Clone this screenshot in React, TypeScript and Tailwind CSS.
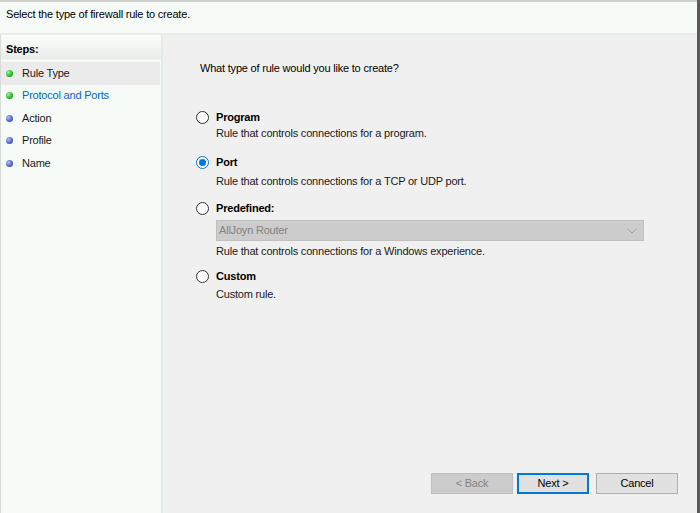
const steps = [
  { label: "Rule Type", done: true, current: false, selected: true },
  { label: "Protocol and Ports", done: true, current: true, selected: false },
  { label: "Action", done: false, current: false, selected: false },
  { label: "Profile", done: false, current: false, selected: false },
  { label: "Name", done: false, current: false, selected: false },
];

const Bullet = ({ done }: { done: boolean }) => (
  <span
    className={
      done
        ? "w-[7px] h-[7px] rounded-full bg-[radial-gradient(circle_at_35%_35%,#9ef59e,#1fb51f_60%,#0c7a0c)]"
        : "w-[7px] h-[7px] rounded-full bg-[radial-gradient(circle_at_35%_35%,#b8c0f5,#4f5fc8_60%,#2c3590)]"
    }
  />
);

const Radio = ({ checked }: { checked: boolean }) =>
  checked ? (
    <span className="w-[13px] h-[13px] rounded-full border border-[#0078d7] bg-white flex items-center justify-center">
      <span className="w-[7px] h-[7px] rounded-full bg-[#0078d7]" />
    </span>
  ) : (
    <span className="w-[13px] h-[13px] rounded-full border border-[#333333] bg-white" />
  );

const Label = ({ text, checked, className }: { text: string; checked?: boolean; className: string }) => (
  <div className={"flex items-center h-[15px] " + className}>
    <div className="w-[20px] flex">
      <Radio checked={!!checked} />
    </div>
    <span className="font-bold text-black">{text}</span>
  </div>
);

const Desc = ({ text, className }: { text: string; className: string }) => (
  <div className={"h-[15px] pl-[20px] text-[#1a1a1a] " + className}>{text}</div>
);

export default function App() {
  return (
    <div
      className="w-[700px] h-[513px] flex overflow-hidden bg-[#f0f0f0] text-[11px] leading-[15px] tracking-[-0.2px] text-black"
      style={{ fontFamily: '"Liberation Sans", Arial, sans-serif' }}
    >
      <div className="flex-1 flex flex-col border-t-2 border-[#cfcfcf]">
        <div className="h-[33px] bg-[#f7fbf7] pt-[5px] pl-[6px] border-b-2 border-[#e8ece8]">
          Select the type of firewall rule to create.
        </div>
        <div className="flex-1 flex">
          <div className="w-[163px] bg-[#f7fbf7] border-l border-[#d8dcd8] border-r-2 border-r-[#e6eae6] flex flex-col">
            <div className="h-[25px] flex items-center pl-[5px] pt-[4px] font-bold bg-[linear-gradient(#fbfdfb,#e9ede9)] border-b border-[#f2f5f2]">
              Steps:
            </div>
            <div className="flex flex-col pt-[2px]">
              {steps.map((s) => (
                <div
                  key={s.label}
                  className={
                    "h-[22.5px] flex items-center gap-[9px] pl-[5px] " +
                    (s.selected ? "bg-[#ebebeb] mr-[1px]" : "")
                  }
                >
                  <Bullet done={s.done} />
                  <span className={s.current ? "text-[#0066cc]" : "text-[#1a1a1a]"}>{s.label}</span>
                </div>
              ))}
            </div>
          </div>
          <div className="flex-1 flex flex-col pl-[33px] pr-[53px]">
            <div className="pt-[26px] pl-[4px] h-[41px]">What type of rule would you like to create?</div>
            <div className="flex flex-col">
              <Label text="Program" className="mt-[34px]" />
              <Desc text="Rule that controls connections for a program." className="mt-[1px]" />
              <Label text="Port" checked className="mt-[13.5px]" />
              <Desc text="Rule that controls connections for a TCP or UDP port." className="mt-[4px]" />
              <Label text="Predefined:" className="mt-[12.5px]" />
              <div className="ml-[20px] mt-[4px] h-[21px] bg-[#cccccc] border border-[#bfbfbf] flex items-center justify-between pl-[2px] pr-[6px] text-[#838383]">
                <span>AllJoyn Router</span>
                <svg width="10" height="6" viewBox="0 0 10 6">
                  <path d="M0.5 0.5 L5 5 L9.5 0.5" fill="none" stroke="#a0a0a0" strokeWidth="1" />
                </svg>
              </div>
              <Desc text="Rule that controls connections for a Windows experience." className="mt-[3px]" />
              <Label text="Custom" className="mt-[10px]" />
              <Desc text="Custom rule." className="mt-[3px]" />
            </div>
            <div className="flex-1" />
            <div className="flex justify-end pb-[19px] mr-[-34px]">
              <div className="w-[82px] h-[21px] bg-[#cccccc] border border-[#bfbfbf] text-[#838383] flex items-center justify-center">
                &lt; Back
              </div>
              <div className="ml-[4px] w-[72px] h-[21px] bg-[#e1e1e1] border-2 border-[#0078d7] flex items-center justify-center">
                Next &gt;
              </div>
              <div className="ml-[7px] w-[82px] h-[21px] bg-[#e1e1e1] border border-[#adadad] flex items-center justify-center">
                Cancel
              </div>
            </div>
          </div>
        </div>
      </div>
      <div className="w-[3px] bg-[#5a5a5a]" />
    </div>
  );
}
